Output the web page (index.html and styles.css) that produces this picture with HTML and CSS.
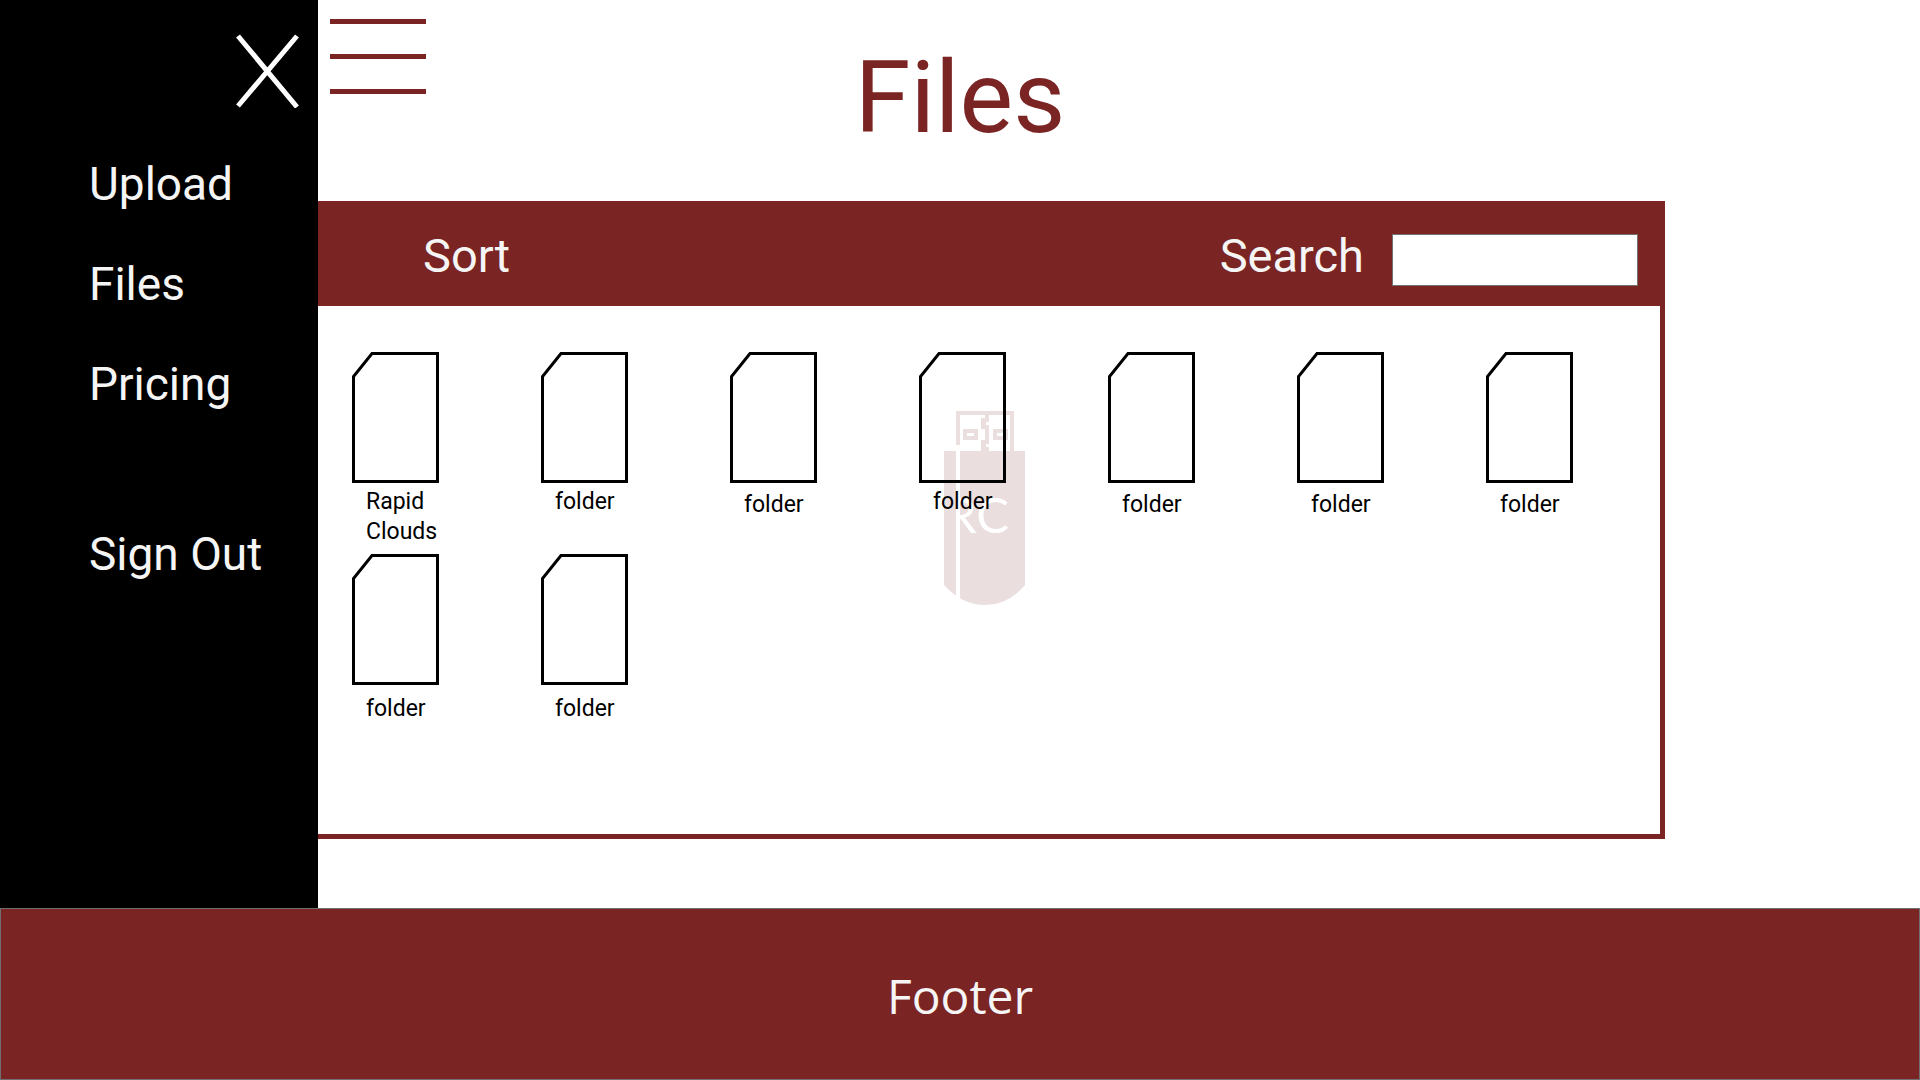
FILE: index.html
```html
<!DOCTYPE html>
<html lang="en">
<head>
<meta charset="utf-8">
<meta name="viewport" content="width=device-width, initial-scale=1">
<title>Files</title>
<link rel="stylesheet" href="styles.css">
</head>
<body>
<svg width="0" height="0" class="defs" aria-hidden="true">
  <symbol id="file" viewBox="0 0 87 131"><path d="M85.500 129.500H1.500V24.500L20 1.500H85.500Z" fill="none" stroke="#000" stroke-width="3"/></symbol>
</svg>
<div class="page">
  <aside class="drawer">
    <button class="close" type="button" aria-label="Close menu">
      <svg width="64" height="74" viewBox="0 0 64 74"><path d="M3 2L62 73M62 2L3 72" stroke="#fff" stroke-width="5"/></svg>
    </button>
    <nav class="menu">
      <a href="#upload">Upload</a>
      <a href="#files">Files</a>
      <a href="#pricing">Pricing</a>
      <a class="signout" href="#signout">Sign Out</a>
    </nav>
  </aside>
  <button class="burger" type="button" aria-label="Open menu"><span></span><span></span><span></span></button>
  <main class="main">
    <h1 class="title">Files</h1>
    <section class="panel">
      <header class="toolbar">
        <button class="sort" type="button">Sort</button>
        <label class="search-label" for="search">Search</label>
        <input class="search" id="search" type="text">
      </header>
      <div class="content">
        <svg class="watermark" width="82" height="194" viewBox="0 0 82 194" aria-hidden="true">
          <clipPath id="body"><path d="M12 40H82V194H12Z"/></clipPath>
          <g fill="#eadede">
            <path d="M12 0H70V40H66V4H16V34H12Z"/>
            <path d="M41 4H45V11H42V14H45V33H42V36H45V40H37V29H41V18H37V7H41Z"/>
            <path fill-rule="evenodd" d="M19 18H34V29H19ZM23 22V25H30V22ZM49 18H64V29H49ZM53 22V25H60V22Z"/>
            <path d="M0 40H81V174Q64 194 41 194Q18 194 0 174Z"/>
          </g>
          <path d="M12 40H16V190H12Z" fill="#fff"/>
          <text class="mark" x="2" y="122" clip-path="url(#body)">RC</text>
        </svg>
        <ul class="files">
          <li><svg width="87" height="131"><use href="#file"/></svg><span class="name">Rapid Clouds</span></li>
          <li><svg width="87" height="131"><use href="#file"/></svg><span class="name">folder</span></li>
          <li><svg width="87" height="131"><use href="#file"/></svg><span class="name low">folder</span></li>
          <li><svg width="87" height="131"><use href="#file"/></svg><span class="name">folder</span></li>
          <li><svg width="87" height="131"><use href="#file"/></svg><span class="name low">folder</span></li>
          <li><svg width="87" height="131"><use href="#file"/></svg><span class="name low">folder</span></li>
          <li><svg width="87" height="131"><use href="#file"/></svg><span class="name low">folder</span></li>
          <li><svg width="87" height="131"><use href="#file"/></svg><span class="name lower">folder</span></li>
          <li><svg width="87" height="131"><use href="#file"/></svg><span class="name lower">folder</span></li>
        </ul>
      </div>
    </section>
  </main>
</div>
<footer class="footer">Footer</footer>
</body>
</html>
```
FILE: styles.css
```css
* { box-sizing: border-box; }
body {
  margin: 0;
  min-height: 100vh;
  display: flex;
  flex-direction: column;
  background: #fff;
  font-family: Roboto, sans-serif;
}
button {
  border: 0;
  padding: 0;
  background: none;
  font: inherit;
  cursor: pointer;
}
.defs { position: absolute; }
.page {
  position: relative;
  flex: 1;
}

/* Slide-out menu, over the page */
.drawer {
  position: absolute;
  inset: 0 auto 0 0;
  z-index: 1;
  width: 318px;
  padding: 34px 19px 0 89px;
  display: flex;
  flex-direction: column;
  background: #000;
}
.close {
  align-self: flex-end;
  height: 74px;
}
.close svg { display: block; }
.menu {
  margin-top: 46px;
  display: flex;
  flex-direction: column;
  gap: 40px;
}
.menu a {
  color: #f5f5f5;
  font-size: 46px;
  line-height: 60px;
  text-decoration: none;
  white-space: nowrap;
}
.menu .signout { margin-top: 70px; }
.burger {
  position: absolute;
  top: 19px;
  left: 330px;
  width: 96px;
  display: flex;
  flex-direction: column;
  gap: 30px;
}
.burger span {
  height: 5px;
  background: #7a2423;
}

.main { padding: 38px 24px 69px; }
.title {
  margin: 0 0 43px;
  color: #7a2423;
  font-size: 101px;
  font-weight: 400;
  line-height: 120px;
  text-align: center;
}
.panel {
  max-width: 1410px;
  margin: 0 auto;
  border: 5px solid #7a2423;
}
.toolbar {
  height: 100px;
  padding: 0 22px 20px 163px;
  display: flex;
  align-items: flex-end;
  background: #7a2423;
  color: #f5f5f5;
  font-size: 47px;
  line-height: 60px;
}
.sort { color: inherit; }
.search-label { margin-left: auto; }
.search {
  width: 246px;
  height: 52px;
  margin-left: 28px;
  padding: 0 12px;
  border: 1px solid #707070;
  background: #fff;
  font: 23px Roboto, sans-serif;
}
.content {
  position: relative;
  min-height: 528px;
  padding: 46px 0 46px 92px;
}
.watermark {
  position: absolute;
  top: 105px;
  left: 684px;
}
.mark {
  fill: #fff;
  font-family: Lato, sans-serif;
  font-size: 49px;
}
.files {
  position: relative;
  margin: 0;
  padding: 0;
  display: grid;
  grid-template-columns: repeat(auto-fill, 87px);
  gap: 7px 102px;
  list-style: none;
}
.files svg { display: block; }
.name {
  display: block;
  margin-top: 4px;
  padding-left: 14px;
  font-size: 23px;
  line-height: 30px;
}
.low { margin-top: 7px; }
.lower { margin-top: 9px; }

.footer {
  min-height: 172px;
  padding: 4px 0 0;
  display: grid;
  place-items: center;
  border: 1px solid #707070;
  background: #7a2423;
  color: #f5f5f5;
  font-family: "Open Sans", sans-serif;
  font-size: 48px;
  line-height: 64px;
}
```
